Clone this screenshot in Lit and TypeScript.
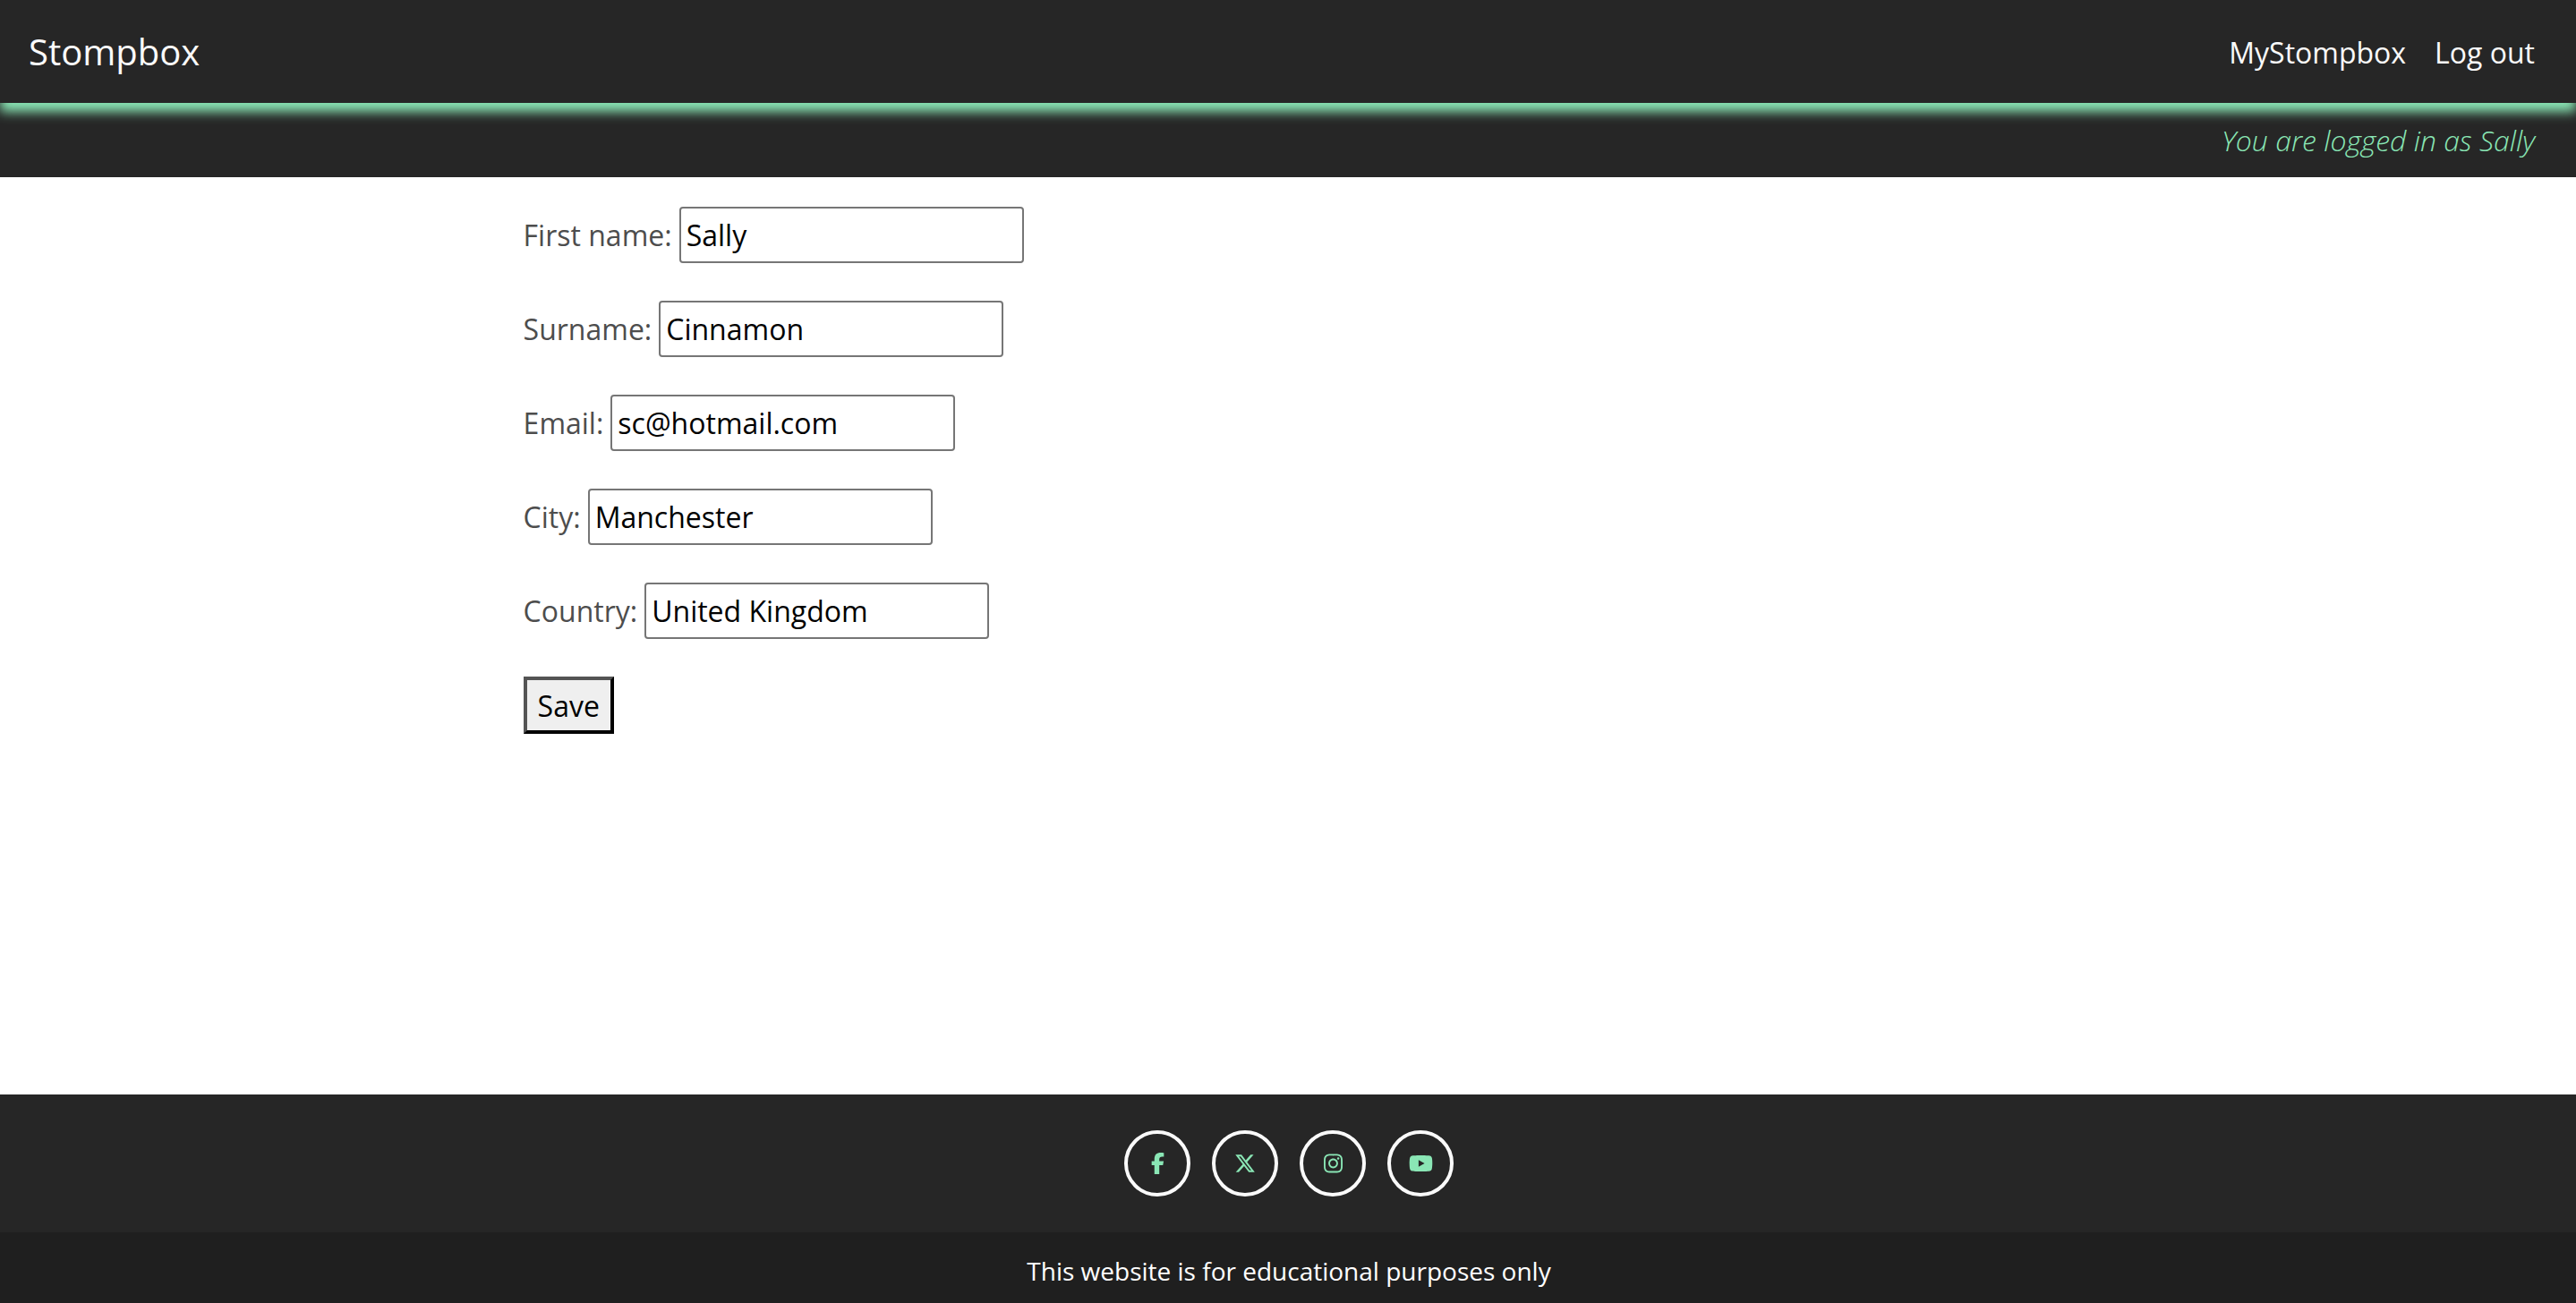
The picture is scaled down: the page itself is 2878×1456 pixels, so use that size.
import { LitElement, html, css, svg } from "lit";
import { customElement } from "lit/decorators.js";

interface Field {
  id: string;
  label: string;
  type: string;
  value: string;
}

interface Social {
  name: string;
  width: number;
  path: string;
}

const FIELDS: Field[] = [
  { id: "first-name", label: "First name:", type: "text", value: "Sally" },
  { id: "surname", label: "Surname:", type: "text", value: "Cinnamon" },
  { id: "email", label: "Email:", type: "email", value: "sc@hotmail.com" },
  { id: "city", label: "City:", type: "text", value: "Manchester" },
  { id: "country", label: "Country:", type: "text", value: "United Kingdom" },
];

const SOCIALS: Social[] = [
  {
    name: "Facebook",
    width: 320,
    path: "M80 299.3V512H196V299.3h86.5l18-97.8H196V166.9c0-51.7 20.3-71.5 72.7-71.5c16.3 0 29.4 .4 37 1.2V7.9C291.4 4 256.4 0 236.2 0C129.3 0 80 50.5 80 159.4v42.1H14v97.8H80z",
  },
  {
    name: "X",
    width: 512,
    path: "M389.2 48h70.6L305.6 224.2 487 464H345L233.7 318.6 106.5 464H35.8L200.7 275.5 26.8 48H172.4L272.9 180.9 389.2 48zM364.4 421.8h39.1L151.1 88h-42L364.4 421.8z",
  },
  {
    name: "Instagram",
    width: 448,
    path: "M224.1 141c-63.6 0-114.9 51.3-114.9 114.9s51.3 114.9 114.9 114.9S339 319.5 339 255.9 287.7 141 224.1 141zm0 189.6c-41.1 0-74.7-33.5-74.7-74.7s33.5-74.7 74.7-74.7 74.7 33.5 74.7 74.7-33.6 74.7-74.7 74.7zm146.4-194.3c0 14.9-12 26.8-26.8 26.8-14.9 0-26.8-12-26.8-26.8s12-26.8 26.8-26.8 26.8 12 26.8 26.8zm76.1 27.2c-1.7-35.9-9.9-67.7-36.2-93.9-26.2-26.2-58-34.4-93.9-36.2-37-2.1-147.9-2.1-184.9 0-35.8 1.7-67.6 9.9-93.9 36.1s-34.4 58-36.2 93.9c-2.1 37-2.1 147.9 0 184.9 1.7 35.9 9.9 67.7 36.2 93.9s58 34.4 93.9 36.2c37 2.1 147.9 2.1 184.9 0 35.9-1.7 67.7-9.9 93.9-36.2 26.2-26.2 34.4-58 36.2-93.9 2.1-37 2.1-147.8 0-184.8zM398.8 388c-7.8 19.6-22.9 34.7-42.6 42.6-29.5 11.7-99.5 9-132.1 9s-102.7 2.6-132.1-9c-19.6-7.8-34.7-22.9-42.6-42.6-11.7-29.5-9-99.5-9-132.1s-2.6-102.7 9-132.1c7.8-19.6 22.9-34.7 42.6-42.6 29.5-11.7 99.5-9 132.1-9s102.7-2.6 132.1 9c19.6 7.8 34.7 22.9 42.6 42.6 11.7 29.5 9 99.5 9 132.1s2.7 102.7-9 132.1z",
  },
  {
    name: "YouTube",
    width: 576,
    path: "M549.655 124.083c-6.281-23.65-24.787-42.276-48.284-48.597C458.781 64 288 64 288 64S117.22 64 74.629 75.486c-23.497 6.322-42.003 24.947-48.284 48.597-11.412 42.867-11.412 132.305-11.412 132.305s0 89.438 11.412 132.305c6.281 23.65 24.787 41.5 48.284 47.821C117.22 448 288 448 288 448s170.78 0 213.371-11.486c23.497-6.321 42.003-24.171 48.284-47.821 11.412-42.867 11.412-132.305 11.412-132.305s0-89.438-11.412-132.305zm-317.51 213.508V175.185l142.739 81.205-142.739 81.201z",
  },
];

@customElement("app-root")
export class AppRoot extends LitElement {
  static styles = css`
    :host {
      display: flex;
      flex-direction: column;
      min-height: 100vh;
      background: #fff;
      color: #4d4d4d;
      font-family: "Open Sans", "Liberation Sans", sans-serif;
      font-size: 32px;
      line-height: 43px;
    }
    a {
      color: inherit;
      text-decoration: none;
    }
    .header {
      position: relative;
      display: flex;
      justify-content: space-between;
      align-items: center;
      padding: 30px 46px 29px 32px;
      background: #262626;
      color: #fafafa;
      box-shadow: 0 10px 12px #8ae6b5;
    }
    .brand {
      font-size: 40px;
      line-height: 56px;
    }
    .nav {
      display: flex;
      gap: 32px;
    }
    .status {
      margin: 0;
      padding: 20px 46px 20px 32px;
      background: #262626;
      color: #8ae6b5;
      font-style: italic;
      font-weight: 300;
      text-align: right;
    }
    .main {
      flex: 1;
      padding: 33px 20%;
    }
    .form {
      display: flex;
      flex-direction: column;
      align-items: flex-start;
      gap: 42px;
      padding: 0 9px;
    }
    .field {
      display: flex;
      align-items: center;
      gap: 8px;
    }
    .input {
      box-sizing: border-box;
      width: 385px;
      height: 63px;
      padding: 0 6px;
      border: 2px solid #767676;
      border-radius: 4px;
      background: #fff;
      color: #000;
      font: inherit;
    }
    .save {
      height: 64px;
      padding: 0 12px;
      border: 4px outset #000;
      border-radius: 0;
      background: #efefef;
      color: #000;
      font: inherit;
    }
    .socials {
      display: flex;
      justify-content: center;
      gap: 24px;
      padding: 40px 30px 40px 32px;
      background: #262626;
    }
    .social {
      display: flex;
      justify-content: center;
      align-items: center;
      box-sizing: border-box;
      width: 74px;
      height: 74px;
      border: 4px solid #fafafa;
      border-radius: 50%;
      color: #8ae6b5;
    }
    .icon {
      height: 24px;
      fill: currentColor;
    }
    .note {
      margin: 0;
      padding: 24px 30px 16px 32px;
      background: #1f1f1f;
      color: #fff;
      font-size: 28px;
      line-height: 39px;
      text-align: center;
    }
  `;

  render() {
    return html`
      <header class="header">
        <a class="brand" href="#home">Stompbox</a>
        <nav class="nav">
          <a href="#mystompbox">MyStompbox</a>
          <a href="#logout">Log out</a>
        </nav>
      </header>
      <p class="status">You are logged in as Sally</p>
      <main class="main">
        <form class="form" @submit=${(e: Event) => e.preventDefault()}>
          ${FIELDS.map(
            (f) => html`
              <div class="field">
                <label for=${f.id}>${f.label}</label>
                <input class="input" id=${f.id} name=${f.id} type=${f.type} .value=${f.value} />
              </div>
            `
          )}
          <button class="save" type="submit">Save</button>
        </form>
      </main>
      <footer>
        <div class="socials">
          ${SOCIALS.map(
            (s) => html`
              <a class="social" href="#${s.name.toLowerCase()}" aria-label=${s.name}>
                <svg class="icon" viewBox="0 0 ${s.width} 512" aria-hidden="true">
                  ${svg`<path d=${s.path}></path>`}
                </svg>
              </a>
            `
          )}
        </div>
        <p class="note">This website is for educational purposes only</p>
      </footer>
    `;
  }
}
